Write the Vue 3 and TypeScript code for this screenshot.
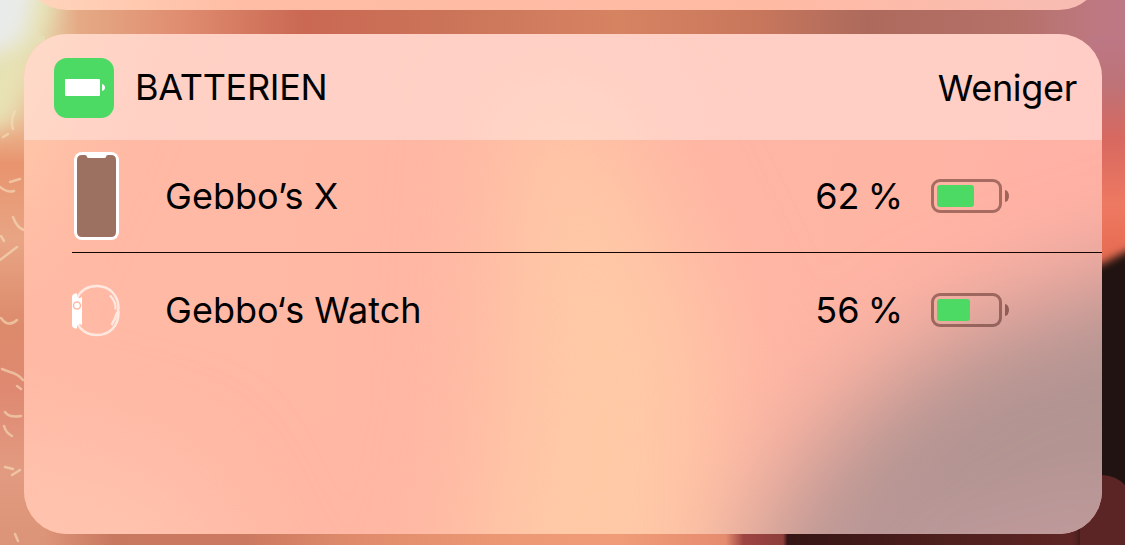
<template>
  <div class="screen">
    <!-- wallpaper -->
    <svg class="wallpaper" viewBox="0 0 1125 545">
      <defs>
        <linearGradient id="top">
          <stop offset="0" stop-color="#e8e8e0" />
          <stop offset="0.03" stop-color="#e6dcb4" />
          <stop offset="0.07" stop-color="#e5aa85" />
          <stop offset="0.16" stop-color="#e08d70" />
          <stop offset="0.27" stop-color="#ca6853" />
          <stop offset="0.4" stop-color="#cb7459" />
          <stop offset="0.55" stop-color="#d68362" />
          <stop offset="0.67" stop-color="#c9775c" />
          <stop offset="0.77" stop-color="#ad6a5c" />
          <stop offset="0.9" stop-color="#b57068" />
          <stop offset="0.97" stop-color="#bd7880" />
          <stop offset="1" stop-color="#bd7886" />
        </linearGradient>
        <linearGradient id="left" x2="0" y2="1">
          <stop offset="0" stop-color="#e6dcb4" />
          <stop offset="0.1" stop-color="#e8d2a8" />
          <stop offset="0.18" stop-color="#ebb58e" />
          <stop offset="0.25" stop-color="#e8946e" />
          <stop offset="0.4" stop-color="#e8a584" />
          <stop offset="0.57" stop-color="#dc8a6b" />
          <stop offset="0.7" stop-color="#df8972" />
          <stop offset="0.85" stop-color="#e29b80" />
          <stop offset="1" stop-color="#dc9478" />
        </linearGradient>
        <linearGradient id="right" x2="0" y2="1">
          <stop offset="0" stop-color="#bd7886" />
          <stop offset="0.09" stop-color="#bd7378" />
          <stop offset="0.2" stop-color="#d76860" />
          <stop offset="0.33" stop-color="#ee7962" />
          <stop offset="0.44" stop-color="#e66b50" />
          <stop offset="1" stop-color="#c85545" />
        </linearGradient>
        <linearGradient id="bottom">
          <stop offset="0" stop-color="#dc9478" />
          <stop offset="0.04" stop-color="#dc9478" />
          <stop offset="0.1" stop-color="#c97860" />
          <stop offset="0.22" stop-color="#cb7960" />
          <stop offset="0.32" stop-color="#e08c6c" />
          <stop offset="0.45" stop-color="#ec9874" />
          <stop offset="0.55" stop-color="#f09c78" />
          <stop offset="0.645" stop-color="#e58c6e" />
          <stop offset="0.661" stop-color="#9d4443" />
          <stop offset="0.696" stop-color="#8e3f3b" />
          <stop offset="0.7" stop-color="#351515" />
          <stop offset="0.82" stop-color="#4b1e1c" />
          <stop offset="1" stop-color="#652827" />
        </linearGradient>
        <filter id="soft" x="-50%" y="-50%" width="200%" height="200%" color-interpolation-filters="sRGB">
          <feGaussianBlur stdDeviation="4" />
        </filter>
        <filter id="haze" x="-50%" y="-50%" width="200%" height="200%" color-interpolation-filters="sRGB">
          <feGaussianBlur stdDeviation="10" />
        </filter>
      </defs>
      <rect width="1125" height="80" fill="url(#top)" />
      <rect y="500" width="1125" height="45" fill="url(#bottom)" />
      <rect y="36" width="45" height="509" fill="url(#left)" />
      <rect x="1090" y="36" width="35" height="509" fill="url(#right)" />
      <path d="M-30-30H62L50 20 32 50 15 120-30 140z" fill="#e7e2b4" filter="url(#haze)" />
      <path d="M-30-30H40L24 40-30 66z" fill="#e9ebea" filter="url(#haze)" />
      <path d="M1080 270l22-6 23-12 30-10v310h-75z" fill="#201311" filter="url(#soft)" />
      <path d="M1080 480l22-5q13 0 23 10v60h-45z" fill="#5c2525" />
      <g class="glints">
        <path d="M15 111q-5 9-2 18M3 137l5-3M0 187q7 6 14 4M10 182l10-3M13 217q4 11 11 13M1 236l3 5M0 260l17-13" />
        <path d="M1 318q7 10 16 2M2 369l8 3q8 2 13 8M17 386l4 3M5 412q4 6 16 4M4 426q2 7 8 10M5 467l8 2M12 475l8-5M15 534l3 7" />
      </g>
    </svg>

    <section class="widget previous"></section>

    <section class="widget">
      <!-- blurred wallpaper showing through the widget -->
      <svg class="backdrop" viewBox="0 0 1078 500">
        <defs>
          <filter
            id="blur"
            filterUnits="userSpaceOnUse"
            x="-300"
            y="-300"
            width="1800"
            height="1300"
            color-interpolation-filters="sRGB"
          >
            <feGaussianBlur stdDeviation="52" />
          </filter>
        </defs>
        <g filter="url(#blur)">
          <path d="M490 60h80l120 240-10 400H410l60-300z" fill="#ffc9a6" />
          <path d="M-100-100h200L40 60-20 200h-80z" fill="#ffccaa" />
          <path d="M-100 380l260 60 100 200h-400z" fill="#ffc3ae" />
          <path d="M1400 150L1078 252 930 305 820 390 735 510 700 800h700z" fill="#b19391" />
          <path d="M820 520l320-80v300H780z" fill="#c39b9e" />
        </g>
      </svg>

      <header class="header">
        <svg class="app-icon" viewBox="0 0 60 60">
          <rect width="60" height="60" rx="13" fill="#4cd964" />
          <rect x="11" y="21" width="35" height="17" rx="1" fill="#fff" />
          <path d="M48 26q3 1 3 3.500t-3 3.500z" fill="#fff" />
        </svg>
        <h1 class="title">BATTERIEN</h1>
        <button class="less">Weniger</button>
      </header>

      <ul class="devices">
        <li v-for="device in devices" :key="device.name" class="device">
          <div class="device-icon">
            <svg v-if="device.kind === 'phone'" class="phone" width="46" height="90" viewBox="0 0 46 90">
              <rect x="0" y="1" width="45" height="88" rx="8" fill="#fff" />
              <path
                d="M8 4h3q2 0 2 2q0 1 2 1h15q2 0 2-1q0-2 2-2h3q5 0 5 5v72q0 5-5 5H8q-5 0-5-5V9q0-5 5-5z"
                fill="#9d7162"
              />
            </svg>
            <svg v-else width="50" height="54" viewBox="0 0 50 54" fill="none">
              <path
                d="M5 15C9 7 16 3 25 3c13 0 21.500 10 21.500 22 0 3-.5 4-2 6-1 4-3 8-5 11M5 40c4 8 11 12 20 12 12.500 0 21.500-9 21.500-22v-2"
                stroke="#ffe8df"
                stroke-width="2.500"
              />
              <path d="M38 12.500c4 4 6 9 5.500 14" stroke="#ffe8df" stroke-width="2.200" />
              <path d="M0 13.500q0-2 3-3h2v3q3 3 5 0v29q-2-3-5 0v3H3q-3-1-3-3z" fill="#fff" />
              <circle cx="5" cy="22.500" r="3.500" fill="#fff" stroke="#ffb9a5" stroke-width="1.500" />
            </svg>
          </div>
          <span class="name">{{ device.name }}</span>
          <span class="level">{{ device.level }} %</span>
          <span class="battery">
            <span class="shell">
              <span class="charge" :style="{ width: `${device.level * 0.59}px` }"></span>
            </span>
            <span class="cap"></span>
          </span>
        </li>
      </ul>
    </section>
  </div>
</template>

<script lang="ts" setup>
interface Device {
  name: string;
  kind: 'phone' | 'watch';
  level: number;
}

const devices: Device[] = [
  { name: 'Gebbo’s X', kind: 'phone', level: 62 },
  { name: 'Gebbo‘s Watch', kind: 'watch', level: 56 },
];
</script>

<style>
body {
  margin: 0;
}
</style>

<style scoped>
.screen {
  position: relative;
  display: flow-root;
  box-sizing: border-box;
  width: 1125px;
  height: 545px;
  padding: 0 23px 0 24px;
  overflow: hidden;
  font-family: Inter, "Liberation Sans", sans-serif;
  font-size: 36px;
  color: #000;
}

/* behind the widgets */
.wallpaper {
  position: absolute;
  inset: 0;
  width: 1125px;
  height: 545px;
}

.glints {
  fill: none;
  stroke: #f6e0bc;
  stroke-width: 2.5;
  stroke-linecap: round;
  opacity: 0.6;
}

.widget {
  position: relative;
  height: 500px;
  overflow: hidden;
  border-radius: 43px;
  background: linear-gradient(100deg, #ffbaa5 0%, #ffb8a4 30%, #ffb5a4 75%, #ffb0a5 100%);
}

/* only its lower edge is on screen */
.previous {
  height: 100px;
  margin-top: -90px;
  margin-bottom: 24px;
  background: linear-gradient(90deg, #ffd6bc, #ffbda5 20%, #ffbaa4 70%, #f7bcb3);
}

.backdrop {
  position: absolute;
  inset: 0;
  width: 1078px;
  height: 500px;
}

.header,
.devices {
  position: relative;
}

.header {
  display: flex;
  align-items: center;
  height: 106px;
  box-sizing: border-box;
  padding: 2px 25px 0 30px;
  background: rgba(255, 238, 235, 0.46);
}

.app-icon {
  width: 60px;
  height: 60px;
  margin-right: 21px;
}

.title {
  margin: 0;
  padding-bottom: 2px;
  font-size: 36px;
  font-weight: 400;
  letter-spacing: -0.3px;
}

.less {
  margin-left: auto;
  padding: 0;
  border: 0;
  background: none;
  font: inherit;
  letter-spacing: -0.3px;
  color: inherit;
}

.devices {
  margin: 0;
  padding: 0 0 0 48px;
  list-style: none;
}

.device {
  display: flex;
  align-items: center;
  height: 112px;
  padding-right: 93px;
}

.device + .device {
  height: 114px;
  border-top: 1px solid #140505;
}

.device-icon {
  display: flex;
  width: 48px;
  margin-right: 45px;
}

.device-icon svg {
  display: block;
  flex: none;
}

.phone {
  margin-left: 2px;
}

.name {
  letter-spacing: 0.03px;
}

.level {
  margin-left: auto;
  margin-right: 28px;
  word-spacing: -2px;
}

.battery {
  display: flex;
  align-items: center;
}

.shell {
  box-sizing: border-box;
  width: 71px;
  height: 34px;
  padding: 3px;
  border: 3px solid rgba(80, 35, 30, 0.5);
  border-radius: 9px;
}

.charge {
  display: block;
  height: 22px;
  border-radius: 3px;
  background: #4cd964;
}

.cap {
  width: 4px;
  height: 12px;
  margin-left: 3px;
  border-radius: 0 4px 4px 0 / 0 6px 6px 0;
  background: rgba(80, 35, 30, 0.55);
}
</style>
